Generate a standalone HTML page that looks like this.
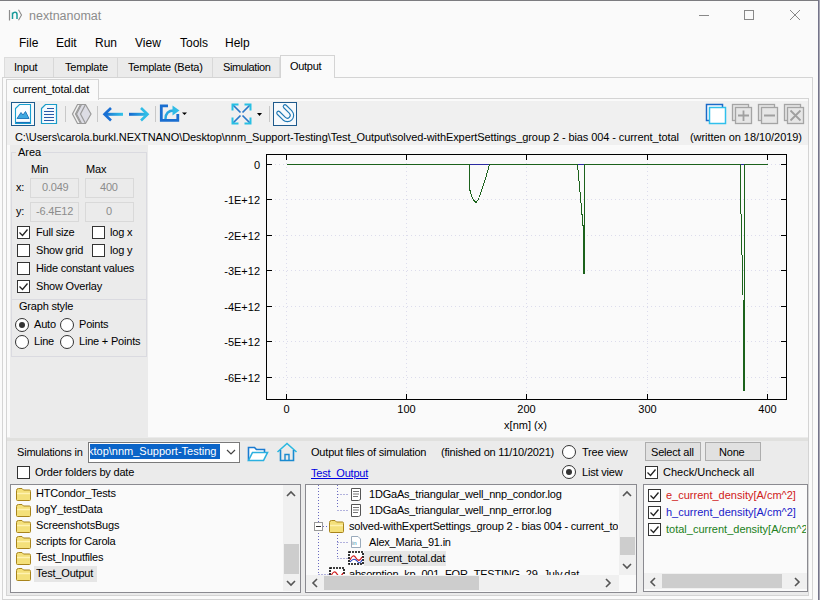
<!DOCTYPE html>
<html><head><meta charset="utf-8">
<style>
*{margin:0;padding:0;box-sizing:border-box}
html,body{width:820px;height:600px;overflow:hidden}
body{background:#fafafa;font-family:"Liberation Sans",sans-serif;font-size:11px;color:#000;position:relative}
.a{position:absolute}
.t{position:absolute;white-space:pre;line-height:13px;letter-spacing:-0.2px}
.bd{border:1px solid #d9d9d9;background:#ebebeb!important}
.cb{width:13px;height:13px;border:1px solid #333;background:#fff}
.rb{width:14px;height:14px;border:1px solid #333;border-radius:50%;background:#fff}
</style></head><body>
<!-- window border -->
<div class="a" style="left:0;top:0;width:820px;height:1px;background:#7c7c80"></div>
<div class="a" style="left:818px;top:0;width:1px;height:600px;background:#74748a"></div>
<div class="a" style="left:819px;top:0;width:1px;height:600px;background:#a8a8b4"></div>

<!-- title bar -->
<svg class="a" style="left:0;top:0" width="30" height="30"><path d="M9.5 10V20.5" stroke="#8c8c8c" stroke-width="1.2"/><path d="M12.5 19V12.5 M12.5 14 Q13.5 12.3 15 12.3 Q17 12.3 17 14.5 V19" fill="none" stroke="#1a9a9a" stroke-width="1.5"/><path d="M18.5 9.8 L21.5 15 L18.5 20.2" fill="none" stroke="#8c8c8c" stroke-width="1.1"/></svg>
<div class="t" style="left:29px;top:10px;font-size:12.5px;color:#8c8c8c;letter-spacing:0">nextnanomat</div>
<div class="a" style="left:699px;top:15px;width:10px;height:1px;background:#888"></div>
<div class="a" style="left:744px;top:10px;width:10px;height:10px;border:1px solid #888"></div>
<svg class="a" style="left:789px;top:9px" width="12" height="12"><path d="M1 1L11 11M11 1L1 11" stroke="#888" stroke-width="1"/></svg>

<!-- menu -->
<div class="t" style="left:19px;top:37px;font-size:12px;letter-spacing:0">File</div>
<div class="t" style="left:56px;top:37px;font-size:12px;letter-spacing:0">Edit</div>
<div class="t" style="left:95px;top:37px;font-size:12px;letter-spacing:0">Run</div>
<div class="t" style="left:135px;top:37px;font-size:12px;letter-spacing:0">View</div>
<div class="t" style="left:180px;top:37px;font-size:12px;letter-spacing:0">Tools</div>
<div class="t" style="left:225px;top:37px;font-size:12px;letter-spacing:0">Help</div>

<!-- main tabs -->
<div class="a" style="left:4px;top:57px;width:276px;height:21px;background:#ebebeb;border:1px solid #dcdcdc;border-bottom:none"></div>
<div class="a" style="left:53px;top:58px;width:1px;height:19px;background:#d8d8d8"></div>
<div class="a" style="left:117px;top:58px;width:1px;height:19px;background:#d8d8d8"></div>
<div class="a" style="left:212px;top:58px;width:1px;height:19px;background:#d8d8d8"></div>
<div class="t" style="left:14px;top:61px">Input</div>
<div class="t" style="left:65px;top:61px">Template</div>
<div class="t" style="left:128px;top:61px">Template (Beta)</div>
<div class="t" style="left:223px;top:61px;letter-spacing:-0.4px">Simulation</div>
<!-- tab page -->
<div class="a" style="left:2px;top:77px;width:811px;height:523px;border:1px solid #d4d4d4;background:#fafafa"></div>
<div class="a" style="left:280px;top:55px;width:55px;height:23px;background:#fafafa;border:1px solid #d4d4d4;border-bottom:none"></div>
<div class="t" style="left:290px;top:60px;letter-spacing:-0.3px">Output</div>

<!-- inner tabs -->
<div class="a" style="left:6px;top:98px;width:803px;height:498px;border:1px solid #d4d4d4"></div>
<div class="a" style="left:6px;top:79px;width:93px;height:21px;background:#fafafa;border:1px solid #d4d4d4;border-bottom:none"></div>
<div class="t" style="left:13px;top:83px;letter-spacing:-0.2px">current_total.dat</div>

<!-- toolbar placeholder -->
<div class="a" style="left:7px;top:101px;width:801px;height:44px;background:#f0f0f0"></div>
<svg class="a" style="left:0;top:98px" width="820" height="32">
 <!-- selected frame 1 -->
 <rect x="11.5" y="4.5" width="23" height="23" fill="#f6f9fc" stroke="#1e5a8c"/>
 <path d="M15.5 10.5 L19.5 6.5 H30.5 V25.5 H15.5 Z" fill="#fafcff" stroke="#18a0d0" stroke-width="1.1"/>
 <path d="M17 20.5 L21 14.5 L23 17 L25.5 13.5 L29 20.5 Z" fill="#40a8e0" stroke="#1a70b8" stroke-width="0.9"/>
 <path d="M16 24.5 H30" stroke="#1a70b8" stroke-width="1.2"/>
 <!-- text doc icon -->
 <path d="M41.5 10.5 L45.5 6.5 H56.5 V25.5 H41.5 Z" fill="#f4fafe" stroke="#1a9cc8" stroke-width="1.2"/>
 <path d="M47 10.5H54M44 13.5H54M44 16.5H54M44 19.5H54M44 22.5H54" stroke="#2a5aa8" stroke-width="1"/>
 <!-- separator -->
 <path d="M65.5 8V24" stroke="#c8c8c8"/>
 <!-- gray diamonds -->
 <path d="M77.5 6.5 L80.5 6.5 L75.5 16 L80.5 25.5 L77.5 25.5 L72.5 16 Z" fill="none" stroke="#9a9a9a" stroke-width="1.2"/><path d="M81.5 6.5 L85.5 6.5 L91 16 L85.5 25.5 L81.5 25.5 L76.5 16 Z" fill="#dcdce4" stroke="#9a9a9a" stroke-width="1.2"/><path d="M85.5 6.5 L80.5 16 L85.5 25.5" fill="none" stroke="#9a9a9a" stroke-width="1.2"/>
 <path d="M97.5 8V24" stroke="#c8c8c8"/>
 <defs>
  <linearGradient id="gl" gradientUnits="userSpaceOnUse" x1="104" y1="0" x2="123" y2="0"><stop offset="0" stop-color="#1668d0"/><stop offset="1" stop-color="#34c4e8"/></linearGradient>
  <linearGradient id="gr" gradientUnits="userSpaceOnUse" x1="129" y1="0" x2="148" y2="0"><stop offset="0" stop-color="#1668d0"/><stop offset="1" stop-color="#34c4e8"/></linearGradient>
 </defs>
 <!-- left arrow -->
 <path d="M105 16.3 H123" stroke="url(#gl)" stroke-width="3"/>
 <path d="M111 10 L104.5 16.3 L111 22.5" fill="none" stroke="#1a70d4" stroke-width="2.6"/>
 <!-- right arrow -->
 <path d="M129 16.3 H147" stroke="url(#gr)" stroke-width="3"/>
 <path d="M141 10 L147.5 16.3 L141 22.5" fill="none" stroke="#30bce6" stroke-width="2.6"/>
 <path d="M155.5 8V24" stroke="#c8c8c8"/>
 <!-- share -->
 <path d="M168 7.8 H161.3 V22.3 H177.8 V16" fill="none" stroke="#1a6ed0" stroke-width="2.8"/>
 <path d="M165.5 21 Q165.5 12.5 174 12.5" fill="none" stroke="#28a8e0" stroke-width="2.4"/>
 <path d="M172.5 7.5 L179.5 12.5 L172.5 17.5 Z" fill="#30bce6"/>
 <path d="M182 14.5 H187 L184.5 17 Z" fill="#000"/>
 <!-- expand -->
 <path d="M233 7 L240.5 14.5 M250 7 L242.5 14.5 M233 25 L240.5 17.5 M250 25 L242.5 17.5" fill="none" stroke="#2a78c8" stroke-width="1.7"/><path d="M232.5 12.5 V6.5 H238.5 M244.5 6.5 H250.5 V12.5 M232.5 19.5 V25.5 H238.5 M244.5 25.5 H250.5 V19.5" fill="none" stroke="#28c0e4" stroke-width="2"/>
 <path d="M257 15 H262 L259.5 18 Z" fill="#000"/>
 <path d="M269.5 8V24" stroke="#c8c8c8"/>
 <!-- magnet selected -->
 <rect x="273.5" y="4.5" width="23" height="23" fill="#f6f9fc" stroke="#1e5a8c"/>
 <path d="M285 8.5 L290.7 14.2 A4.6 4.6 0 0 1 284.2 20.7 L278.5 15" fill="none" stroke="#1e78b4" stroke-width="4.6" stroke-linecap="round"/>
 <path d="M285 8.5 L290.7 14.2 A4.6 4.6 0 0 1 284.2 20.7 L278.5 15" fill="none" stroke="#f6f9fc" stroke-width="2.4" stroke-linecap="round"/>
 <!-- right icons -->
 <rect x="706.5" y="6.5" width="16" height="16" fill="#fff" stroke="#1a6ac8" stroke-width="1.5"/>
 <rect x="709.5" y="9.5" width="16" height="16" fill="#fff" stroke="#30c0ec" stroke-width="1.5"/>
 <g fill="#e6e6e6" stroke="#a4a4a4" stroke-width="1.3">
  <rect x="732.5" y="6.5" width="16" height="16"/><rect x="735.5" y="9.5" width="16" height="16"/>
  <rect x="758.5" y="6.5" width="16" height="16"/><rect x="761.5" y="9.5" width="16" height="16"/>
  <rect x="784.5" y="6.5" width="16" height="16"/><rect x="787.5" y="9.5" width="16" height="16"/>
 </g>
 <path d="M743.5 12.5V23M738 17.5H749 M764 17.5H775 M790.5 12.5L800.5 22.5M800.5 12.5L790.5 22.5" stroke="#a0a0a0" stroke-width="1.8"/>
</svg>

<!-- path -->
<div class="t" style="left:15px;top:131px;letter-spacing:-0.09px">C:\Users\carola.burkl.NEXTNANO\Desktop\nnm_Support-Testing\Test_Output\solved-withExpertSettings_group 2 - bias 004 - current_total</div>
<div class="t" style="left:690px;top:131px;letter-spacing:-0.05px">(written on 18/10/2019)</div>

<!-- left panel -->
<div class="a" style="left:10px;top:145px;width:138px;height:292px;background:#ebebeb"></div>
<div class="a" style="left:11px;top:152px;width:136px;height:147px;border:1px solid #dadae0;border-bottom:none"></div>
<div class="a" style="left:16px;top:146px;padding:0 2px;background:#ebebeb;font-size:11px;line-height:13px;white-space:pre">Area</div>
<div class="t" style="left:31px;top:163px">Min</div>
<div class="t" style="left:86px;top:163px">Max</div>
<div class="t" style="left:16px;top:181px">x:</div>
<div class="t" style="left:16px;top:205px">y:</div>
<div class="a bd" style="left:30px;top:178px;width:49px;height:20px;background:#ebebeb"></div>
<div class="a bd" style="left:85px;top:178px;width:49px;height:20px;background:#ebebeb"></div>
<div class="a bd" style="left:30px;top:202px;width:49px;height:20px;background:#ebebeb"></div>
<div class="a bd" style="left:85px;top:202px;width:49px;height:20px;background:#ececf0"></div>
<div class="t" style="left:42px;top:181px;color:#8c8c8c">0.049</div>
<div class="t" style="left:100px;top:181px;color:#8c8c8c">400</div>
<div class="t" style="left:36px;top:205px;color:#8c8c8c">-6.4E12</div>
<div class="t" style="left:106px;top:205px;color:#8c8c8c">0</div>
<!-- checkboxes -->
<div class="a cb" style="left:17px;top:226px"></div><div class="t" style="left:36px;top:226px">Full size</div>
<div class="a cb" style="left:92px;top:226px"></div><div class="t" style="left:110px;top:226px">log x</div>
<div class="a cb" style="left:17px;top:244px"></div><div class="t" style="left:36px;top:244px">Show grid</div>
<div class="a cb" style="left:92px;top:244px"></div><div class="t" style="left:110px;top:244px">log y</div>
<div class="a cb" style="left:17px;top:262px"></div><div class="t" style="left:36px;top:262px">Hide constant values</div>
<div class="a cb" style="left:17px;top:280px"></div><div class="t" style="left:36px;top:280px">Show Overlay</div>
<svg class="a" style="left:17px;top:226px" width="13" height="13"><path d="M2.5 6.5 L5.5 9.5 L10.5 3.5" fill="none" stroke="#222" stroke-width="1.3"/></svg>
<svg class="a" style="left:17px;top:280px" width="13" height="13"><path d="M2.5 6.5 L5.5 9.5 L10.5 3.5" fill="none" stroke="#222" stroke-width="1.3"/></svg>
<!-- graph style -->
<div class="a" style="left:11px;top:299px;width:136px;height:58px;border:1px solid #dadae0"></div>
<div class="t" style="left:19px;top:300px">Graph style</div>
<div class="a rb" style="left:15px;top:318px"></div><div class="t" style="left:34px;top:318px">Auto</div>
<div class="a" style="left:19px;top:322px;width:6px;height:6px;border-radius:50%;background:#333"></div>
<div class="a rb" style="left:60px;top:318px"></div><div class="t" style="left:79px;top:318px">Points</div>
<div class="a rb" style="left:15px;top:335px"></div><div class="t" style="left:34px;top:335px">Line</div>
<div class="a rb" style="left:60px;top:335px"></div><div class="t" style="left:79px;top:335px">Line + Points</div>

<!-- plot -->
<svg class="a" style="left:0;top:0" width="820" height="440" font-family="Liberation Sans" font-size="11">
 <g stroke="#dcdcec" stroke-width="1" stroke-dasharray="1 3" shape-rendering="crispEdges">
  <path d="M286.5 155V398 M406.5 155V398 M526.5 155V398 M647.5 155V398 M767.5 155V398"/>
  <path d="M267 164.5H786 M267 199.5H786 M267 235.5H786 M267 270.5H786 M267 306.5H786 M267 341.5H786 M267 377.5H786"/>
 </g>
 <rect x="266.5" y="154.5" width="520" height="245" fill="none" stroke="#000" stroke-width="1"/>
 <g stroke="#000" stroke-width="1">
  <path d="M267 164.5h5 M786 164.5h-5 M267 199.5h5 M786 199.5h-5 M267 235.5h5 M786 235.5h-5 M267 270.5h5 M786 270.5h-5 M267 306.5h5 M786 306.5h-5 M267 341.5h5 M786 341.5h-5 M267 377.5h5 M786 377.5h-5 M286.5 155v5 M286.5 399v-5 M406.5 155v5 M406.5 399v-5 M526.5 155v5 M526.5 399v-5 M647.5 155v5 M647.5 399v-5 M767.5 155v5 M767.5 399v-5"/>
 </g>
 <g text-anchor="end">
  <text x="260" y="168.5">0</text>
  <text x="260" y="203.5">-1E+12</text>
  <text x="260" y="239.5">-2E+12</text>
  <text x="260" y="274.5">-3E+12</text>
  <text x="260" y="310.5">-4E+12</text>
  <text x="260" y="345.5">-5E+12</text>
  <text x="260" y="381.5">-6E+12</text>
 </g>
 <g text-anchor="middle">
  <text x="286.5" y="413">0</text>
  <text x="406.5" y="413">100</text>
  <text x="526.5" y="413">200</text>
  <text x="647.5" y="413">300</text>
  <text x="767.5" y="413">400</text>
  <text x="525.5" y="429">x[nm] (x)</text>
 </g>
 <g fill="none" stroke="#1c621c" stroke-width="1" shape-rendering="crispEdges">
  <path d="M286.5 164.5 H767.5"/>
  <path d="M469.5 164.5 V188.5 Q472 200 476 202.5 Q479 202 489.5 164.5"/>
  <path d="M577.5 164.5 L583.5 231 V273.5 M584.3 164.5 V273.5"/>
  <path d="M740 164.5 V172.5 L743 295 L743.3 390.8 M744.3 164.5 V390.8"/>
 </g>
 <g stroke="#2a2aa0" stroke-width="1" shape-rendering="crispEdges">
  <path d="M470 164.5H489 M578 164.5H584 M740.5 164.5H744"/>
 </g>
</svg>

<!-- bottom panel -->
<div class="a" style="left:7px;top:437px;width:801px;height:158px;background:#ebebeb"></div>
<div class="a" style="left:7px;top:438px;width:801px;height:3px;background:#e0e0de"></div>
<div class="t" style="left:17px;top:446px">Simulations in</div>
<div class="a" style="left:88px;top:442px;width:152px;height:21px;background:#fff;border:1px solid #7a7a7a"></div>
<div class="a" style="left:90px;top:444px;width:130px;height:15px;background:#0a64c8"></div>
<div class="a" style="left:90px;top:444px;width:130px;height:15px;overflow:hidden"><div class="t" style="left:-2px;top:1px;color:#fff;letter-spacing:0">ktop\nnm_Support-Testing</div></div>
<svg class="a" style="left:226px;top:448px" width="10" height="8"><path d="M1 2 L5 6 L9 2" fill="none" stroke="#444" stroke-width="1.2"/></svg>
<svg class="a" style="left:246px;top:444px" width="24" height="20">
 <path d="M2.5 16.5 V3.5 H8.5 L10.5 5.5 H18.5 V8.5" fill="#fff" stroke="#1a7ad0" stroke-width="1.6"/>
 <path d="M2.5 16.5 L6.5 8.5 H21.5 L17.5 16.5 Z" fill="#fff" stroke="#2ab0e0" stroke-width="1.6"/>
</svg>
<svg class="a" style="left:276px;top:442px" width="22" height="20">
 <path d="M1.5 10 L11 1.5 L20.5 10" fill="none" stroke="#2ab8e0" stroke-width="1.6"/>
 <path d="M4.5 8 V18.5 H17.5 V8" fill="none" stroke="#1a8ad0" stroke-width="1.6"/>
 <path d="M9 18.5 V12.5 H13 V18.5" fill="none" stroke="#1a8ad0" stroke-width="1.4"/>
</svg>
<div class="a cb" style="left:17px;top:466px"></div><div class="t" style="left:35px;top:466px">Order folders by date</div>

<!-- folder list -->
<div class="a" style="left:10px;top:484px;width:291px;height:109px;background:#fafafa;border:1px solid #8a8a90"></div>
<div class="a" style="left:283px;top:485px;width:17px;height:106px;background:#f0f0f0"></div>
<div class="a" style="left:284px;top:544px;width:15px;height:30px;background:#cdcdcd"></div>
<svg class="a" style="left:286px;top:490px" width="10" height="8"><path d="M1 6 L5 2 L9 6" fill="none" stroke="#555" stroke-width="1.6"/></svg>
<svg class="a" style="left:286px;top:579px" width="10" height="8"><path d="M1 2 L5 6 L9 2" fill="none" stroke="#555" stroke-width="1.6"/></svg>
<div class="a" style="left:34px;top:566px;width:63px;height:16px;background:#e6e6e6"></div>
<svg class="a" style="left:16px;top:487px" width="16" height="15"><path d="M0.5 3.5 Q0.5 1.5 2.5 1.5 H6 L7.5 3 H13.5 Q14.5 3 14.5 4.5 V12.5 Q14.5 13.5 13.5 13.5 H1.5 Q0.5 13.5 0.5 12.5 Z" fill="#f4e07a" stroke="#a8841c"/><path d="M1 6.5 H14" stroke="#fff2b0" stroke-width="1.5"/></svg>
<div class="t" style="left:36px;top:487px">HTCondor_Tests</div>
<svg class="a" style="left:16px;top:503px" width="16" height="15"><path d="M0.5 3.5 Q0.5 1.5 2.5 1.5 H6 L7.5 3 H13.5 Q14.5 3 14.5 4.5 V12.5 Q14.5 13.5 13.5 13.5 H1.5 Q0.5 13.5 0.5 12.5 Z" fill="#f4e07a" stroke="#a8841c"/><path d="M1 6.5 H14" stroke="#fff2b0" stroke-width="1.5"/></svg>
<div class="t" style="left:36px;top:503px">logY_testData</div>
<svg class="a" style="left:16px;top:519px" width="16" height="15"><path d="M0.5 3.5 Q0.5 1.5 2.5 1.5 H6 L7.5 3 H13.5 Q14.5 3 14.5 4.5 V12.5 Q14.5 13.5 13.5 13.5 H1.5 Q0.5 13.5 0.5 12.5 Z" fill="#f4e07a" stroke="#a8841c"/><path d="M1 6.5 H14" stroke="#fff2b0" stroke-width="1.5"/></svg>
<div class="t" style="left:36px;top:519px">ScreenshotsBugs</div>
<svg class="a" style="left:16px;top:535px" width="16" height="15"><path d="M0.5 3.5 Q0.5 1.5 2.5 1.5 H6 L7.5 3 H13.5 Q14.5 3 14.5 4.5 V12.5 Q14.5 13.5 13.5 13.5 H1.5 Q0.5 13.5 0.5 12.5 Z" fill="#f4e07a" stroke="#a8841c"/><path d="M1 6.5 H14" stroke="#fff2b0" stroke-width="1.5"/></svg>
<div class="t" style="left:36px;top:535px">scripts for Carola</div>
<svg class="a" style="left:16px;top:551px" width="16" height="15"><path d="M0.5 3.5 Q0.5 1.5 2.5 1.5 H6 L7.5 3 H13.5 Q14.5 3 14.5 4.5 V12.5 Q14.5 13.5 13.5 13.5 H1.5 Q0.5 13.5 0.5 12.5 Z" fill="#f4e07a" stroke="#a8841c"/><path d="M1 6.5 H14" stroke="#fff2b0" stroke-width="1.5"/></svg>
<div class="t" style="left:36px;top:551px">Test_Inputfiles</div>
<svg class="a" style="left:16px;top:567px" width="16" height="15"><path d="M0.5 3.5 Q0.5 1.5 2.5 1.5 H6 L7.5 3 H13.5 Q14.5 3 14.5 4.5 V12.5 Q14.5 13.5 13.5 13.5 H1.5 Q0.5 13.5 0.5 12.5 Z" fill="#f4e07a" stroke="#a8841c"/><path d="M1 6.5 H14" stroke="#fff2b0" stroke-width="1.5"/></svg>
<div class="t" style="left:36px;top:567px">Test_Output</div>

<!-- tree list -->
<div class="a" style="left:305px;top:484px;width:332px;height:109px;background:#fafafa;border:1px solid #8a8a90"></div>
<div class="a" style="left:619px;top:485px;width:17px;height:90px;background:#f0f0f0"></div>
<div class="a" style="left:620px;top:537px;width:15px;height:18px;background:#cdcdcd"></div>
<svg class="a" style="left:622px;top:490px" width="10" height="8"><path d="M1 6 L5 2 L9 6" fill="none" stroke="#555" stroke-width="1.6"/></svg>
<svg class="a" style="left:622px;top:562px" width="10" height="8"><path d="M1 2 L5 6 L9 2" fill="none" stroke="#555" stroke-width="1.6"/></svg>
<div class="a" style="left:306px;top:575px;width:313px;height:16px;background:#f0f0f0"></div>
<div class="a" style="left:324px;top:576px;width:155px;height:14px;background:#cdcdcd"></div>
<svg class="a" style="left:311px;top:578px" width="8" height="10"><path d="M6 1 L2 5 L6 9" fill="none" stroke="#555" stroke-width="1.6"/></svg>
<svg class="a" style="left:604px;top:578px" width="8" height="10"><path d="M2 1 L6 5 L2 9" fill="none" stroke="#555" stroke-width="1.6"/></svg>
<svg class="a" style="left:306px;top:485px" width="312" height="90"><g stroke="#6a6ac0" stroke-width="1" stroke-dasharray="1 2" fill="none"><path d="M318.5 485V575 M337.5 485V509 M337.5 532V558 M337.5 494.5H349 M337.5 510.5H349 M323 526.5H329 M337.5 542.5H349 M337.5 558.5H348 M318.5 574.5H329" transform="translate(-306 -485)"/></g></svg>
<svg class="a" style="left:350px;top:487px" width="12" height="14"><path d="M1.5 1.5 H10.5 V12.5 L8.5 13.5 H1.5 Z" fill="#fff" stroke="#555"/><path d="M3 4.5H9M3 7H9M3 9.5H8" stroke="#666" stroke-width="0.9"/></svg>
<div class="t" style="left:369px;top:488px">1DGaAs_triangular_well_nnp_condor.log</div>
<svg class="a" style="left:350px;top:503px" width="12" height="14"><path d="M1.5 1.5 H10.5 V12.5 L8.5 13.5 H1.5 Z" fill="#fff" stroke="#555"/><path d="M3 4.5H9M3 7H9M3 9.5H8" stroke="#666" stroke-width="0.9"/></svg>
<div class="t" style="left:369px;top:504px">1DGaAs_triangular_well_nnp_error.log</div>
<div class="a" style="left:314px;top:522px;width:9px;height:9px;border:1px solid #999;background:#fff"></div><div class="a" style="left:316px;top:526px;width:5px;height:1px;background:#333"></div>
<svg class="a" style="left:329px;top:519px" width="16" height="15"><path d="M0.5 3.5 Q0.5 1.5 2.5 1.5 H6 L7.5 3 H13.5 Q14.5 3 14.5 4.5 V12.5 Q14.5 13.5 13.5 13.5 H1.5 Q0.5 13.5 0.5 12.5 Z" fill="#f4e07a" stroke="#a8841c"/><path d="M1 6.5 H14" stroke="#fff2b0" stroke-width="1.5"/></svg>
<div class="t" style="left:349px;top:520px;width:269px;overflow:hidden">solved-withExpertSettings_group 2 - bias 004 - current_total</div>
<svg class="a" style="left:350px;top:535px" width="12" height="14"><path d="M1.5 1.5 H8 L10.5 4 V12.5 H1.5 Z" fill="#fff" stroke="#9ab"/><text x="2" y="10" font-size="6" fill="#38a">in</text></svg>
<div class="t" style="left:369px;top:536px">Alex_Maria_91.in</div>
<div class="a" style="left:364px;top:551px;width:82px;height:15px;background:#e6e6e6"></div>
<svg class="a" style="left:348px;top:551px" width="16" height="14"><rect x="1" y="1" width="14" height="12" fill="#fff" stroke="#000" stroke-width="1.6" stroke-dasharray="2 1"/><path d="M2 9 Q5 2 8 7 T14 6" fill="none" stroke="#d02020" stroke-width="1.3"/><path d="M2 11 Q6 6 9 10 T14 9" fill="none" stroke="#2040c0" stroke-width="1.1"/></svg>
<div class="t" style="left:369px;top:552px">current_total.dat</div>
<div class="a" style="left:306px;top:566px;width:313px;height:9px;overflow:hidden"><svg class="a" style="left:23px;top:1px" width="16" height="14"><rect x="1" y="1" width="14" height="12" fill="#fff" stroke="#000" stroke-width="1.6" stroke-dasharray="2 1"/><path d="M2 9 Q5 2 8 7 T14 6" fill="none" stroke="#d02020" stroke-width="1.3"/></svg><div class="t" style="left:43px;top:2px">absorption_kp_001_FOR_TESTING_29_July.dat</div></div>

<div class="t" style="left:311px;top:446px">Output files of simulation</div>
<div class="t" style="left:441px;top:446px">(finished on 11/10/2021)</div>
<div class="a rb" style="left:562px;top:445px"></div><div class="t" style="left:582px;top:446px">Tree view</div>
<div class="t" style="left:311px;top:467px;color:#0000e0;text-decoration:underline">Test_Output</div>
<div class="a rb" style="left:562px;top:465px"></div><div class="t" style="left:582px;top:466px">List view</div>
<div class="a" style="left:566px;top:469px;width:6px;height:6px;border-radius:50%;background:#333"></div>

<!-- right column -->
<div class="a" style="left:645px;top:442px;width:56px;height:19px;background:#e1e1e1;border:1px solid #adadad"></div>
<div class="t" style="left:651px;top:446px">Select all</div>
<div class="a" style="left:705px;top:442px;width:56px;height:19px;background:#e1e1e1;border:1px solid #adadad"></div>
<div class="t" style="left:719px;top:446px">None</div>
<div class="a cb" style="left:645px;top:466px"></div><div class="t" style="left:663px;top:466px;letter-spacing:0">Check/Uncheck all</div>
<svg class="a" style="left:645px;top:466px" width="13" height="13"><path d="M2.5 6.5 L5.5 9.5 L10.5 3.5" fill="none" stroke="#222" stroke-width="1.3"/></svg>
<div class="a" style="left:643px;top:484px;width:165px;height:108px;background:#fafafa;border:1px solid #8a8a90;overflow:hidden"></div>
<div class="a cb" style="left:648px;top:489px"></div><div class="t" style="left:666px;top:489px;color:#d02020;letter-spacing:0">e_current_density[A/cm^2]</div>
<div class="a cb" style="left:648px;top:506px"></div><div class="t" style="left:666px;top:506px;color:#2020c8;letter-spacing:0">h_current_density[A/cm^2]</div>
<div class="a cb" style="left:648px;top:523px"></div><div class="t" style="left:666px;top:523px;color:#208020;letter-spacing:0;width:140px;overflow:hidden">total_current_density[A/cm^2]</div>
<svg class="a" style="left:648px;top:489px" width="13" height="48"><path d="M2.5 6.5 L5.5 9.5 L10.5 3.5 M2.5 23.5 L5.5 26.5 L10.5 20.5 M2.5 40.5 L5.5 43.5 L10.5 37.5" fill="none" stroke="#222" stroke-width="1.3"/></svg>
<div class="a" style="left:644px;top:573px;width:163px;height:16px;background:#f0f0f0"></div>
<div class="a" style="left:662px;top:574px;width:120px;height:14px;background:#cdcdcd"></div>
<svg class="a" style="left:649px;top:577px" width="8" height="10"><path d="M6 1 L2 5 L6 9" fill="none" stroke="#555" stroke-width="1.6"/></svg>
<svg class="a" style="left:793px;top:577px" width="8" height="10"><path d="M2 1 L6 5 L2 9" fill="none" stroke="#555" stroke-width="1.6"/></svg>

</body></html>
